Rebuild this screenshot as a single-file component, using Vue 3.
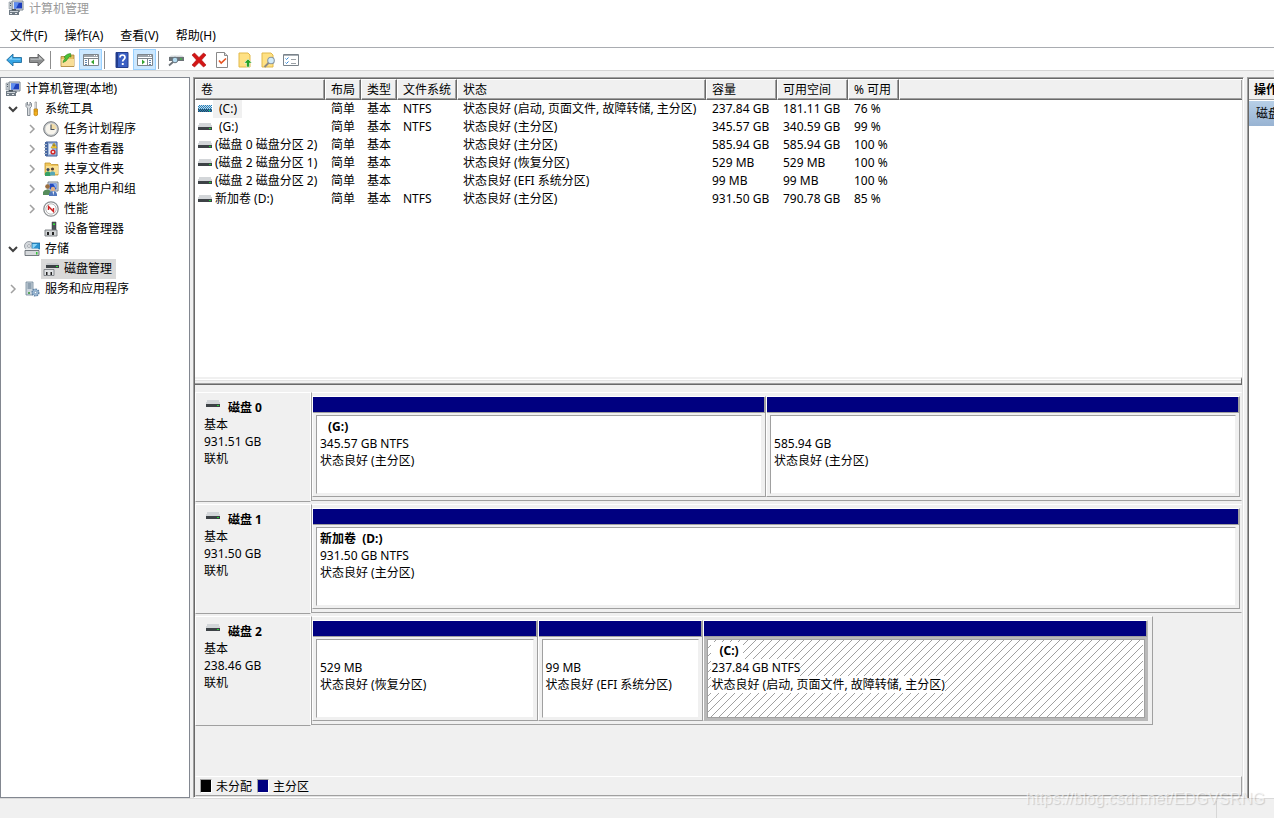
<script setup>
const icons = {
  computer: '<path d="M4 1h11v9H4z" fill="#dfe3e8" stroke="#7b8590"/><path d="M6 2.500h8v6H6z" fill="#1d3fbd"/><path d="M6 2.500h5l-3 6H6z" fill="#5f8df0"/><path d="M9 10h3v2H9z" fill="#8b939b"/><path d="M1 2h3v7H1z" fill="#c3cad1" stroke="#8b939b" stroke-width=".6"/><path d="M2 3.500h1M2 5.500h1" stroke="#55606b"/><path d="M1 10h10v5H1z" fill="#6f7a84"/><path d="M2 11h8v1H2z" fill="#cfd5da"/><path d="M4 9h4v1.500H4z" fill="#4b545d"/><path d="M2 13h2v1H2zM7 13h2v1H7z" fill="#e7eaed"/>',
  tools: '<path d="M3.500 1v3h2.500V1l1.500 1.500v3L6 7v7.500H3.500V7L2 5.500v-3z" fill="#d9dcdf" stroke="#6f7780" stroke-width=".8"/><path d="M11 1h1.500v7H11z" fill="#f2f2f2" stroke="#888" stroke-width=".6"/><path d="M10 8h3.500v6q-1.700 1.500-3.500 0z" fill="#f2b01e" stroke="#b87b0a" stroke-width=".7"/><path d="M10 10h3.500" stroke="#b87b0a" stroke-width=".6"/>',
  clock: '<circle cx="8" cy="8" r="7.300" fill="#c6c9cb" stroke="#75797d"/><circle cx="8" cy="8" r="5.600" fill="#f7f4ec"/><path d="M8 8V2.400a5.600 5.600 0 0 1 5.600 5.600z" fill="#f1dca8"/><path d="M8 3.500v5h3.500" fill="none" stroke="#4b5560" stroke-width="1.100"/>',
  event: '<path d="M3 1h11v14H3z" fill="#9fb7dd" stroke="#405f9a"/><path d="M2 1h3v14H2z" fill="#4868a2"/><path d="M1 3.500h3M1 6.500h3M1 9.500h3M1 12.500h3" stroke="#aab6c8"/><path d="M6 3h3v10H6z" fill="#e4ecf8"/><path d="m11 2 3 5H8z" fill="#ffd53b" stroke="#b58a00" stroke-width=".5"/><path d="M11 3.500v2" stroke="#222" stroke-width=".9"/><circle cx="10" cy="11" r="2.600" fill="#d22c2c"/><path d="m9 10 2 2m0-2-2 2" stroke="#fff" stroke-width=".8"/>',
  share: '<path d="M2 2h5l1.500 1.500H15V14H2z" fill="#f0c65b" stroke="#c1942c" stroke-width=".8"/><path d="M3 5h12v8H3z" fill="#f9df92"/><circle cx="5" cy="8.500" r="1.600" fill="#39485d"/><circle cx="9.500" cy="8" r="1.600" fill="#584232"/><path d="M2 15v-3l2-1.500h2L7.500 12v3z" fill="#37a165"/><path d="M7 14.500v-3l1.500-1h2l1.500 1v3z" fill="#54a6b6"/>',
  users: '<path d="M5 1h10v9H5z" fill="#dfe3e8" stroke="#7b8590"/><path d="M6.500 2.500h7v6h-7z" fill="#2349bd"/><path d="M10 2.500h3.500v6z" fill="#86aef0"/><circle cx="4.500" cy="5.500" r="2.300" fill="#9a6d3e"/><circle cx="10" cy="8" r="2.200" fill="#e0b184"/><path d="M0 14v-3q1-2.500 4-2.500T8 11v3z" fill="#568d5b"/><path d="M6 15v-2q1-3 4-3t4 3v2z" fill="#5077bd"/><path d="m9.500 10.500.8 4 .8-4z" fill="#fff"/>',
  perf: '<circle cx="8" cy="8" r="7.200" fill="#fff" stroke="#8d9093" stroke-width="1.300"/><circle cx="8" cy="8" r="5.200" fill="#fff" stroke="#999" stroke-width=".7"/><path d="M5.500 9V5.500l5 5V7" fill="none" stroke="#cc2020" stroke-width="1.400"/>',
  device: '<path d="M9 1h4v8H9z" fill="#4d5359" stroke="#33383c" stroke-width=".5"/><path d="M10 2.500h2V4h-2z" fill="#31e335"/><path d="M2 9h12v6H2z" fill="#cfd2d4" stroke="#777c80" stroke-width=".9"/><path d="M4 11h2v3H4zM9 11h2v3H9z" fill="#222"/>',
  storage: '<circle cx="5" cy="5" r="4.500" fill="#d4d8dc" stroke="#858d95" stroke-width=".8"/><circle cx="5" cy="5" r="1.400" fill="#fff" stroke="#858d95" stroke-width=".7"/><path d="M8 2h8v6H8z" fill="#2d94d2" stroke="#176498" stroke-width=".7"/><path d="M8.500 3h5l-4 4h-1z" fill="#8bd6f7"/><path d="M1 9.500h14v5H1z" fill="#d5d8db" stroke="#666d74" stroke-width=".9"/><path d="M1 9h14l-1-1.500H2z" fill="#eceeef"/><path d="M12 11h1.500v2.500H12z" fill="#35c43a"/>',
  diskmgr: '<path d="M3 4h13v3H3z" fill="#3c4145"/><path d="M4 2h11l1 2H3z" fill="#c7cacd"/><path d="M13 5h2v1h-2z" fill="#2fe03a"/><path d="M1 8.500h10v6H1z" fill="#e0e2e4" stroke="#70757a" stroke-width=".8"/><path d="M3 11h1.500v3H3zM7.500 11H9v3H7.500z" fill="#222"/>',
  services: '<path d="M2 1h7v13H2z" fill="#cad4dd" stroke="#708698" stroke-width=".8"/><path d="M3.500 3h4M3.500 5h4M3.500 7h4" stroke="#577186"/><path d="M4 11h2v2H4z" fill="#5ba65c"/><circle cx="11.500" cy="11.500" r="3.300" fill="#a5c0db" stroke="#5d82a6" stroke-width="1.600" stroke-dasharray="1.600 .9"/><circle cx="11.500" cy="11.500" r="1.200" fill="#fff" stroke="#5d82a6" stroke-width=".7"/>',
  back: '<path d="M.7 8 7 2v3.500h8.500v5H7V14z" fill="#35a4e4" stroke="#236e9e" stroke-width=".9"/><path d="M2.500 7.500 6 4.300v2.500h8.300v.9z" fill="#8fd6fa"/>',
  forward: '<path d="M15.300 8 9 2v3.500H.5v5H9V14z" fill="#8d8f90" stroke="#5d5f60" stroke-width=".9"/><path d="M13.500 7.500 10 4.300v2.500H1.700v.9z" fill="#c2c4c5"/>',
  upfolder: '<path d="M1 4.500h5L7.500 3H14v11.500H1z" fill="#e3bd62" stroke="#a98233" stroke-width=".8"/><path d="M1.500 7H14v7H1.500z" fill="#f8de98"/><path d="M3 10.500q0-2 2.500-4.500L4 5q3-3.500 6.500-3.500L11 5 9.500 4.500 6 9z" fill="#4cc237" stroke="#27831a" stroke-width=".6"/>',
  paneleft: '<path d="M.5 2.500h15v11H.5z" fill="#fff" stroke="#7e858b"/><path d="M1 3h14v2H1z" fill="#9ca3aa"/><path d="M11 3.500h1M13 3.500h1" stroke="#fff"/><path d="M1 6.500h14M5.500 7v6" stroke="#7e858b"/><path d="M2 8.500h2M2 10.500h2M2 12.500h2" stroke="#6287b0"/><path d="M11 7.500v5L8 10z" fill="#35a431"/>',
  paneright: '<path d="M.5 2.500h15v11H.5z" fill="#fff" stroke="#7e858b"/><path d="M1 3h14v2H1z" fill="#9ca3aa"/><path d="M11 3.500h1M13 3.500h1" stroke="#fff"/><path d="M1 6.500h14M10.500 7v6" stroke="#7e858b"/><path d="M12 8.500h2M12 10.500h2M12 12.500h2" stroke="#6287b0"/><path d="M5 7.500v5L8 10z" fill="#35a431"/>',
  help: '<path d="M2 .5h12v15H2z" fill="#3b60c4" stroke="#243f8e"/><path d="M2 1h2v14H2z" fill="#213c8c"/><path d="M6 5.500Q6 3 8.500 3T11 5.500c0 1.800-2.300 2-2.300 4" fill="none" stroke="#fff" stroke-width="1.700"/><path d="M7.800 11h1.900v2H7.800z" fill="#fff"/>',
  rescan: '<path d="M1 5 3 3.500h11L16 5z" fill="#d5d9dc"/><path d="M1 5h15v4H1z" fill="#6d7378"/><path d="M12 6.500h2v1h-2z" fill="#2bdc33"/><circle cx="7" cy="8" r="2.800" fill="#b4dcf1" stroke="#67747f"/><path d="m5 10-4 3.500" stroke="#6b7278" stroke-width="1.800"/>',
  remove: '<path d="M1 3 3.500 1 8 5.500 12.500 1 15 3l-4.500 5 4.500 5-2.500 2L8 10.500 3.500 15 1 13l4.500-5z" fill="#d41515" stroke="#a70b0b" stroke-width=".6"/>',
  check: '<path d="M2.500.5h8l3 3v12h-11z" fill="#fff" stroke="#898989"/><path d="M10.500.5v3h3" fill="#ddd" stroke="#898989"/><path d="m5 8.500 2.200 2.500L12 6.500" fill="none" stroke="#e65320" stroke-width="1.700"/>',
  export: '<path d="M2 1h9l2 2v12H2z" fill="#ffe184" stroke="#e2b94b"/><path d="m11 7 4 4h-2.500v4h-3v-4H7z" fill="#29a329" stroke="#fff" stroke-width=".5"/>',
  search: '<path d="M2 1h9l2 2v12H2z" fill="#ffe184" stroke="#e2b94b"/><circle cx="11" cy="8.500" r="3.300" fill="#d1ebfa" stroke="#8996a0" stroke-width="1.100"/><path d="m8.500 11-4 4" stroke="#8e8a83" stroke-width="1.800"/>',
  list: '<path d="M.5 2.500h15v11H.5z" fill="#fff" stroke="#7a838b"/><path d="M1 3h14v1H1z" fill="#a8afb5"/><path d="m2.500 6.500 1 1 2-2M2.500 10.500l1 1 2-2" fill="none" stroke="#3186d7"/><path d="M8 7.500h5M8 11.500h5" stroke="#9ba1a6"/>',
}

const menus = ['文件(F)', '操作(A)', '查看(V)', '帮助(H)']

const tools = [
  { icon: 'back', label: '后退' },
  { icon: 'forward', label: '前进' },
  null,
  { icon: 'upfolder', label: '上移一级' },
  { icon: 'paneleft', label: '显示控制台树', on: true },
  null,
  { icon: 'help', label: '帮助' },
  { icon: 'paneright', label: '显示操作窗格', on: true },
  null,
  { icon: 'rescan', label: '重新扫描' },
  { icon: 'remove', label: '删除' },
  { icon: 'check', label: '属性' },
  { icon: 'export', label: '打开' },
  { icon: 'search', label: '浏览' },
  { icon: 'list', label: '设置' },
]

const tree = [
  { text: '计算机管理(本地)', icon: 'computer', level: 0 },
  { text: '系统工具', icon: 'tools', level: 1, state: 'open' },
  { text: '任务计划程序', icon: 'clock', level: 2, state: 'closed' },
  { text: '事件查看器', icon: 'event', level: 2, state: 'closed' },
  { text: '共享文件夹', icon: 'share', level: 2, state: 'closed' },
  { text: '本地用户和组', icon: 'users', level: 2, state: 'closed' },
  { text: '性能', icon: 'perf', level: 2, state: 'closed' },
  { text: '设备管理器', icon: 'device', level: 2 },
  { text: '存储', icon: 'storage', level: 1, state: 'open' },
  { text: '磁盘管理', icon: 'diskmgr', level: 2, selected: true },
  { text: '服务和应用程序', icon: 'services', level: 1, state: 'closed' },
]

const columns = ['卷', '布局', '类型', '文件系统', '状态', '容量', '可用空间', '% 可用']

const volumes = [
  { name: '(C:)', letter: true, selected: true, cells: ['简单', '基本', 'NTFS', '状态良好 (启动, 页面文件, 故障转储, 主分区)', '237.84 GB', '181.11 GB', '76 %'] },
  { name: '(G:)', letter: true, cells: ['简单', '基本', 'NTFS', '状态良好 (主分区)', '345.57 GB', '340.59 GB', '99 %'] },
  { name: '(磁盘 0 磁盘分区 2)', cells: ['简单', '基本', '', '状态良好 (主分区)', '585.94 GB', '585.94 GB', '100 %'] },
  { name: '(磁盘 2 磁盘分区 1)', cells: ['简单', '基本', '', '状态良好 (恢复分区)', '529 MB', '529 MB', '100 %'] },
  { name: '(磁盘 2 磁盘分区 2)', cells: ['简单', '基本', '', '状态良好 (EFI 系统分区)', '99 MB', '99 MB', '100 %'] },
  { name: '新加卷 (D:)', cells: ['简单', '基本', 'NTFS', '状态良好 (主分区)', '931.50 GB', '790.78 GB', '85 %'] },
]

const disks = [
  {
    name: '磁盘 0', size: '931.51 GB', span: 1, rest: 0,
    parts: [
      { name: '(G:)', indent: true, size: '345.57 GB NTFS', status: '状态良好 (主分区)', share: 454 },
      { name: '', size: '585.94 GB', status: '状态良好 (主分区)', share: 474 },
    ],
  },
  {
    name: '磁盘 1', size: '931.50 GB', span: 1, rest: 0,
    parts: [{ name: '新加卷\u00a0 (D:)', size: '931.50 GB NTFS', status: '状态良好 (主分区)', share: 1 }],
  },
  {
    name: '磁盘 2', size: '238.46 GB', span: 841, rest: 90, bounded: true,
    parts: [
      { name: '', size: '529 MB', status: '状态良好 (恢复分区)', share: 225 },
      { name: '', size: '99 MB', status: '状态良好 (EFI 系统分区)', share: 165 },
      { name: '(C:)', indent: true, size: '237.84 GB NTFS', status: '状态良好 (启动, 页面文件, 故障转储, 主分区)', share: 445, selected: true },
    ],
  },
]
</script>

<template>
  <div class="window">
    <header class="title">
      <svg class="icon" viewBox="0 0 16 16" v-html="icons.computer"></svg>
      <span>计算机管理</span>
    </header>

    <nav class="menu">
      <button v-for="m in menus" :key="m" type="button">{{ m }}</button>
    </nav>

    <div class="toolbar">
      <template v-for="(t, i) in tools" :key="i">
        <button v-if="t" type="button" :class="{ on: t.on }" :aria-label="t.label">
          <svg class="icon" viewBox="0 0 16 16" v-html="icons[t.icon]"></svg>
        </button>
        <span v-else class="sep"></span>
      </template>
    </div>

    <main class="main">
      <ul class="tree">
        <li v-for="n in tree" :key="n.text" :class="'level' + n.level">
          <button v-if="n.state" type="button" class="chevron" :class="n.state" :aria-label="n.text">
            <svg viewBox="0 0 12 12">
              <path v-if="n.state === 'open'" d="M2 4l4 4 4-4" />
              <path v-else d="M4 2l4 4-4 4" />
            </svg>
          </button>
          <span v-else-if="n.level" class="chevron"></span>
          <span class="node" :class="{ selected: n.selected }">
            <svg class="icon" viewBox="0 0 16 16" v-html="icons[n.icon]"></svg>
            <span>{{ n.text }}</span>
          </span>
        </li>
      </ul>

      <section class="center">
        <div class="volumes">
          <table>
            <colgroup>
              <col class="w-name" /><col class="w-short" /><col class="w-short" /><col class="w-fs" />
              <col class="w-status" /><col class="w-size" /><col class="w-size" /><col class="w-pct" /><col />
            </colgroup>
            <thead>
              <tr>
                <th v-for="c in columns" :key="c" scope="col">{{ c }}</th>
                <td class="filler"></td>
              </tr>
            </thead>
            <tbody>
              <tr v-for="v in volumes" :key="v.name">
                <td class="name">
                  <div class="volume">
                    <svg class="drive" viewBox="0 0 14 8" shape-rendering="crispEdges">
                      <path d="M1 0h12l1 4H0z" fill="#d3d6d9" />
                      <path d="M0 4h14v3H0z" fill="#3d4246" />
                      <path d="M11 5h2v1h-2z" fill="#22d532" />
                      <g v-if="v.selected" stroke="#1683c8" stroke-dasharray="1 1">
                        <path d="M1 .5h13M1 2.500h13M1 4.500h13M1 6.500h13M0 1.500h14M0 3.500h14M0 5.500h14" />
                      </g>
                    </svg>
                    <span class="label" :class="{ letter: v.letter, selected: v.selected }">{{ v.name }}</span>
                  </div>
                </td>
                <td v-for="(c, i) in v.cells" :key="i">{{ c }}</td>
                <td></td>
              </tr>
            </tbody>
          </table>
        </div>
        <div class="splitter"></div>

        <div class="disks">
          <div v-for="d in disks" :key="d.name" class="disk">
            <div class="disk-info">
              <div class="disk-name">
                <svg class="drive" viewBox="0 0 14 8" shape-rendering="crispEdges">
                  <path d="M1 0h12l1 4H0z" fill="#d3d6d9" />
                  <path d="M0 4h14v3H0z" fill="#3d4246" />
                  <path d="M11 5h2v1h-2z" fill="#22d532" />
                </svg>
                <strong>{{ d.name }}</strong>
              </div>
              <div>基本</div>
              <div>{{ d.size }}</div>
              <div>联机</div>
            </div>
            <div class="parts" :class="{ bounded: d.bounded }" :style="{ flexGrow: d.span }">
              <div v-for="p in d.parts" :key="p.status + p.size" class="part" :class="{ selected: p.selected }" :style="{ flexGrow: p.share }">
                <div class="bar"></div>
                <div class="body">
                  <svg v-if="p.selected" class="hatch" shape-rendering="crispEdges">
                    <defs>
                      <pattern id="hatch" width="8" height="8" patternUnits="userSpaceOnUse">
                        <path d="M0 7h1v1H0zM1 6h1v1H1zM2 5h1v1H2zM3 4h1v1H3zM4 3h1v1H4zM5 2h1v1H5zM6 1h1v1H6zM7 0h1v1H7z" fill="#a0a0a0" />
                      </pattern>
                    </defs>
                    <rect width="100%" height="100%" fill="url(#hatch)" />
                  </svg>
                  <div class="line"><strong :class="{ indent: p.indent }">{{ p.name }}</strong></div>
                  <div class="line"><span>{{ p.size }}</span></div>
                  <div class="line"><span>{{ p.status }}</span></div>
                </div>
              </div>
            </div>
            <div :style="{ flexGrow: d.rest }"></div>
          </div>
        </div>

        <div class="legend">
          <i class="swatch black"></i><span>未分配</span>
          <i class="swatch navy"></i><span>主分区</span>
        </div>
      </section>

      <aside class="actions">
        <h2>操作</h2>
        <div class="group">磁盘管理</div>
      </aside>
    </main>

    <footer class="status"><span class="cell"></span></footer>
    <div class="watermark">https://blog.csdn.net/EDGVSRNG</div>
  </div>
</template>

<style>
body {
  margin: 0;
  overflow: hidden;
}
</style>

<style scoped>
.window {
  position: relative;
  display: flex;
  flex-direction: column;
  min-height: 100vh;
  overflow: hidden;
  background: #fff;
  color: #000;
  font: 12px/17px "Noto Sans", "Noto Sans CJK SC", sans-serif;
  white-space: nowrap;
}

.window *,
.window {
  box-sizing: border-box;
}

button {
  display: flex;
  align-items: center;
  justify-content: center;
  padding: 0;
  border: 0;
  background: none;
  color: inherit;
  font: inherit;
}

.icon {
  display: block;
  flex: none;
  width: 16px;
  height: 16px;
}

.drive {
  display: block;
  flex: none;
  width: 14px;
  height: 8px;
}

.title {
  display: flex;
  align-items: center;
  gap: 5px;
  height: 16px;
  padding-left: 8px;
  color: #999;
}

.menu {
  display: flex;
  gap: 17px;
  height: 31px;
  padding: 8px 0 0 10px;
}

.toolbar {
  display: flex;
  height: 24px;
  padding: 1px 0 0 2px;
  border-top: 1px solid #a9acb1;
  border-bottom: 1px solid #d5d5d5;
}

.toolbar button {
  width: 23px;
}

.toolbar .on {
  border: 1px solid #99d1ff;
  background: #cce8ff;
}

.sep {
  width: 1px;
  margin: 2px 5px 1px 2px;
  background: #8d8d8d;
}

.main {
  display: flex;
  flex: 1;
  gap: 3px;
  padding-top: 6px;
  background: #f0f0f0;
}

.tree {
  flex: none;
  width: 190px;
  margin: 0;
  padding: 1px 0 0 4px;
  border: 1px solid #828790;
  background: #fff;
  list-style: none;
}

.tree li {
  display: flex;
  height: 20px;
}

.level2 {
  padding-left: 19px;
}

.chevron {
  width: 15px;
}

.chevron svg {
  width: 12px;
  height: 12px;
  fill: none;
  stroke: #a0a0a0;
  stroke-width: 1.5;
}

.chevron.open svg {
  stroke: #404040;
  stroke-width: 2;
}

.node {
  display: flex;
  align-items: center;
  gap: 5px;
  padding: 0 4px;
}

.node > span {
  margin-bottom: 1px;
}

.level0 .node {
  padding-left: 0;
}

.node.selected {
  background: #d9d9d9;
  margin-left: 2px;
  padding-left: 2px;
}

.center {
  display: flex;
  flex: 1;
  flex-direction: column;
  min-width: 0;
  border: 1px solid;
  border-color: #a0a0a0 #fff #fff #a0a0a0;
  box-shadow: inset 1px 1px #696969, inset -1px -1px #e3e3e3;
  padding: 1px;
}

.volumes {
  flex: 1;
  overflow: hidden;
  background: #fff;
}

table {
  width: 100%;
  table-layout: fixed;
  border-spacing: 0;
}

.w-name { width: 130px; }
.w-short { width: 36px; }
.w-fs { width: 60px; }
.w-status { width: 249px; }
.w-size { width: 71px; }
.w-pct { width: 51px; }

th,
td {
  height: 18px;
  padding: 0 0 0 6px;
  text-align: left;
  font-weight: 400;
  line-height: 18px;
}

th,
.filler {
  height: 21px;
  padding-left: 5px;
  border: 1px solid;
  border-color: #fff #696969 #696969 #fff;
  background: #f0f0f0;
  box-shadow: inset -1px -1px #a0a0a0;
}

.filler {
  border-right: 0;
}

td.name {
  padding-left: 3px;
}

.volume {
  display: flex;
  align-items: center;
}

.volume .drive {
  margin-bottom: 1px;
}

.label {
  padding: 0 5px 0 3px;
}

.label.letter {
  margin-left: 1px;
  padding-left: 6px;
}

.label.selected {
  background: #f0f0f0;
}

.splitter {
  height: 8px;
  border-top: 2px solid #f0f0f0;
  background: linear-gradient(#fff 1px, #e3e3e3 1px 2px, #f0f0f0 2px 4px, #a0a0a0 4px 5px, #696969 5px);
  border-right: 1px solid #696969;
}

.disks {
  padding: 7px 0 50px;
}

.disk {
  display: flex;
  align-items: flex-start;
  height: 112px;
}

.disk:last-child {
  height: 110px;
}

.disk-info {
  flex: none;
  width: 116px;
  height: 110px;
  padding: 6px 0 0 8px;
  border: 1px solid;
  border-color: #fff #fff #a0a0a0;
}

.disk-name {
  display: flex;
  gap: 8px;
  padding-left: 2px;
}

.disk-name .drive {
  margin-top: 1px;
}

.parts {
  display: flex;
  flex-basis: 0;
  min-width: 0;
  height: 109px;
  padding: 3px 1px 3px 0;
  border: 1px solid;
  border-color: #fff transparent #a0a0a0 #a0a0a0;
}

.parts.bounded {
  padding-right: 4px;
  border-right-color: #a0a0a0;
}

.part {
  display: flex;
  flex-direction: column;
  flex-basis: 0;
  min-width: 0;
  border: 1px solid;
  border-color: #fff #a0a0a0 #a0a0a0 #fff;
}

.bar {
  flex: none;
  height: 16px;
  border-right: 1px solid #a0a0a0;
  border-bottom: 1px solid #a0a0a0;
  background: #000080;
}

.body {
  position: relative;
  flex: 1;
  margin: 2px 3px 2px 3px;
  padding: 2px 0 0 3px;
  border: 1px solid;
  border-color: #a0a0a0 #f0f0f0 #f0f0f0 #a0a0a0;
  background: #fff;
  overflow: hidden;
}

.selected .body {
  margin: 2px 2px 2px 3px;
  border-color: #a0a0a0;
}

.part.selected {
  background: #b9b9b9;
  border-right-color: #b9b9b9;
  border-bottom-color: #b9b9b9;
}

.hatch {
  position: absolute;
  inset: 0;
  width: 100%;
  height: 100%;
}

.line {
  position: relative;
  height: 17px;
}

.line span,
.line strong {
  display: inline-block;
  height: 17px;
  background: #fff;
}

.indent {
  padding: 0 4px 0 8px;
}

.legend {
  display: flex;
  align-items: center;
  gap: 5px;
  height: 20px;
  padding-left: 4px;
  border: 1px solid;
  border-color: #fff #a0a0a0 #a0a0a0 transparent;
}

.swatch {
  width: 12px;
  height: 14px;
  margin-right: -1px;
  border: 1px solid;
  border-color: #a0a0a0 #fff #fff #a0a0a0;
}

.black { background: #000; }
.navy { background: #000080; }

.actions {
  flex: none;
  width: 27px;
  overflow: hidden;
  border: 1px solid #a0a0a0;
  border-width: 1px 0 0 1px;
  background: #fff;
  box-shadow: inset 1px 1px #696969;
  padding: 1px 0 0 1px;
}

.actions h2 {
  height: 21px;
  margin: 0 0 1px;
  padding-left: 5px;
  border-top: 1px solid #fff;
  border-bottom: 1px solid #a0a0a0;
  background: #f0f0f0;
  font-size: 12px;
  line-height: 20px;
}

.group {
  height: 25px;
  padding-left: 7px;
  background: linear-gradient(#b7cfe7, #98b3d2);
  line-height: 25px;
}

.status {
  display: flex;
  justify-content: flex-end;
  height: 20px;
  border-top: 1px solid #dadada;
  background: #f0f0f0;
}

.cell {
  width: 58px;
  margin-top: 2px;
  border-left: 1px solid #d7d7d7;
}

.watermark {
  position: absolute;
  right: 9px;
  bottom: 9px;
  color: rgba(255, 255, 255, 0.6);
  font: 16px/20px "Liberation Sans", sans-serif;
  text-shadow: 1px 1px 1px rgba(0, 0, 0, 0.16);
}
</style>
